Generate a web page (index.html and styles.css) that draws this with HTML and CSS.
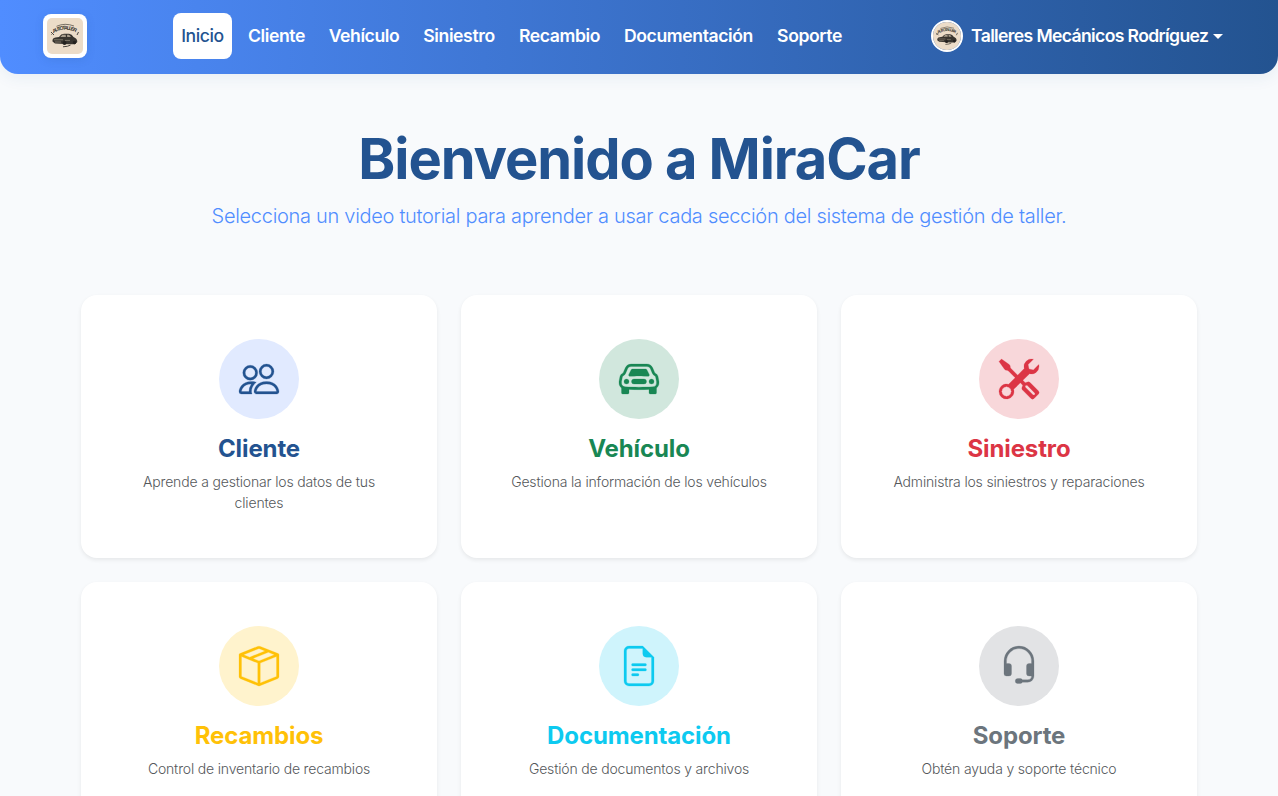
FILE: index.html
```html
<!DOCTYPE html>
<html lang="es">
<head>
<meta charset="utf-8">
<title>MiraCar</title>
<link rel="stylesheet" href="styles.css">
</head>
<body>
<header class="navbar">
  <a class="brand"><svg viewBox="0 0 36 36">
    <rect width="36" height="36" fill="#ecdcc8"/>
    <path id="arc" d="M6.500 15Q18 8 30 15" fill="none"/>
    <text class="brand-text"><textPath href="#arc" textLength="23.500">AUTOTALLER</textPath></text>
    <g id="car">
    <path d="M9.500 8.300Q18 4.500 27 8" fill="none" stroke="#5b544b" stroke-width=".8"/>
    <path d="M4 14l3 3M4.500 16.500l2-2M30 17l1.500-3" stroke="#4a443d" stroke-width="1"/>
    <path d="M5.500 23.500Q5 20 8.500 19.500L12 19Q14 15.800 17 15.700H22Q25 16 26.500 19Q30.500 20.500 30.300 24L28 26.200H22L8 25.500Z" fill="#39352f"/>
    <path d="M13.300 19l2.200-2.200h3.200l.2 2.300zM20 16.800h2l2 2.200h-3.800z" fill="#a89d8c"/>
    <path d="M7 21.800h9M18 22.400h5M8 24h6" stroke="#9b9080" stroke-width=".7"/>
    <circle cx="17.500" cy="25" r="2" fill="#24211e"/><circle cx="27.500" cy="24.500" r="1.700" fill="#24211e"/>
    <path d="M16 28.800q5-.2 7.500-1.700" stroke="#4a443d" fill="none" stroke-width="1"/>
    </g>
  </svg></a>
  <nav class="menu">
    <a class="link link-inicio active">Inicio</a>
    <a class="link link-cliente">Cliente</a>
    <a class="link link-vehiculo">Vehículo</a>
    <a class="link link-siniestro">Siniestro</a>
    <a class="link link-recambio">Recambio</a>
    <a class="link link-documentacion">Documentación</a>
    <a class="link link-soporte">Soporte</a>
  </nav>
  <a class="user">
    <span class="avatar"><svg viewBox="0 0 36 36">
      <rect width="36" height="36" fill="#ecdcc8"/>
      <text class="brand-text"><textPath href="#arc" textLength="23.500">AUTOTALLER</textPath></text>
      <use href="#car"/>
    </svg></span>
    <span class="user-name">Talleres Mecánicos Rodríguez</span>
    <span class="caret"></span>
  </a>
</header>
<main class="page">
  <h1 class="title">Bienvenido a MiraCar</h1>
  <p class="subtitle">Selecciona un video tutorial para aprender a usar cada sección del sistema de gestión de taller.</p>
  <section class="grid">
    <article class="card cliente">
      <div class="icon"><svg viewBox="0 0 16 16"><path d="M15 14s1 0 1-1-1-4-5-4-5 3-5 4 1 1 1 1zm-7.978-1L7 12.996c.001-.264.167-1.030.76-1.720C8.312 10.629 9.282 10 11 10c1.717 0 2.687.63 3.240 1.276.593.69.758 1.457.76 1.720l-.008.002-.014.002zM11 7a2 2 0 1 0 0-4 2 2 0 0 0 0 4m3-2a3 3 0 1 1-6 0 3 3 0 0 1 6 0M6.936 9.280a6 6 0 0 0-1.230-.247A7 7 0 0 0 5 9c-4 0-5 3-5 4q0 1 1 1h4.216A2.240 2.240 0 0 1 5 13c0-1.010.377-2.042 1.090-2.904.243-.294.526-.569.846-.816M4.920 10A5.500 5.500 0 0 0 4 13H1c0-.26.164-1.030.76-1.724.545-.636 1.492-1.256 3.160-1.275ZM1.500 5.500a3 3 0 1 1 6 0 3 3 0 0 1-6 0m3-2a2 2 0 1 0 0 4 2 2 0 0 0 0-4"/></svg></div>
      <h2>Cliente</h2>
      <p>Aprende a gestionar los datos de tus clientes</p>
    </article>
    <article class="card vehiculo">
      <div class="icon"><svg viewBox="0 0 16 16"><path d="M4 9a1 1 0 1 1-2 0 1 1 0 0 1 2 0m10 0a1 1 0 1 1-2 0 1 1 0 0 1 2 0M6 8a1 1 0 0 0 0 2h4a1 1 0 1 0 0-2zM4.862 4.276 3.906 6.190a.51.51 0 0 0 .497.731c.91-.073 2.350-.17 3.597-.17s2.688.097 3.597.17a.51.51 0 0 0 .497-.731l-.956-1.913A.5.5 0 0 0 10.691 4H5.309a.5.5 0 0 0-.447.276"/><path d="M2.520 3.515A2.500 2.500 0 0 1 4.820 2h6.362c1 0 1.904.596 2.298 1.515l.792 1.848c.075.175.21.319.38.404.5.25.855.715.965 1.262l.335 1.679q.05.242.049.49v.413c0 .814-.39 1.543-1 1.997V13.500a.5.5 0 0 1-.5.5h-2a.5.5 0 0 1-.5-.5v-1.338c-1.292.048-2.745.088-4 .088s-2.708-.04-4-.088V13.500a.5.5 0 0 1-.5.5h-2a.5.5 0 0 1-.5-.5v-1.892c-.61-.454-1-1.183-1-1.997v-.413a2.500 2.500 0 0 1 .049-.49l.335-1.680c.11-.546.465-1.012.964-1.261a.8.8 0 0 0 .381-.404l.792-1.848ZM4.820 3a1.500 1.500 0 0 0-1.379.91l-.792 1.847a1.800 1.800 0 0 1-.853.904.8.8 0 0 0-.43.564L1.030 8.904a1.500 1.500 0 0 0-.03.294v.413c0 .796.62 1.448 1.408 1.484 1.555.07 3.786.155 5.592.155s4.037-.084 5.592-.155A1.480 1.480 0 0 0 15 9.611v-.413q0-.148-.03-.294l-.335-1.680a.8.8 0 0 0-.43-.563 1.800 1.800 0 0 1-.853-.904l-.792-1.848A1.500 1.500 0 0 0 11.180 3z"/></svg></div>
      <h2>Vehículo</h2>
      <p>Gestiona la información de los vehículos</p>
    </article>
    <article class="card siniestro">
      <div class="icon"><svg viewBox="0 0 16 16"><path d="M1 0 0 1l2.200 3.081a1 1 0 0 0 .815.419h.07a1 1 0 0 1 .708.293l2.675 2.675-2.617 2.654A3.003 3.003 0 0 0 0 13a3 3 0 1 0 5.878-.851l2.654-2.617.968.968-.305.914a1 1 0 0 0 .242 1.023l3.270 3.270a.997.997 0 0 0 1.414 0l1.586-1.586a.997.997 0 0 0 0-1.414l-3.270-3.270a1 1 0 0 0-1.023-.242L10.500 9.500l-.96-.96 2.680-2.643A3.005 3.005 0 0 0 16 3q0-.405-.102-.777l-2.140 2.141L12 4l-.364-1.757L13.777.102a3 3 0 0 0-3.675 3.680L7.462 6.460 4.793 3.793a1 1 0 0 1-.293-.707v-.071a1 1 0 0 0-.419-.814zm9.646 10.646a.5.5 0 0 1 .708 0l2.914 2.915a.5.5 0 0 1-.707.707l-2.915-2.914a.5.5 0 0 1 0-.708M3 11l.471.242.529.026.287.445.445.287.026.529L5 13l-.242.471-.026.529-.445.287-.287.445-.529.026L3 15l-.471-.242L2 14.732l-.287-.445L1.268 14l-.026-.529L1 13l.242-.471.026-.529.445-.287.287-.445.529-.026z"/></svg></div>
      <h2>Siniestro</h2>
      <p>Administra los siniestros y reparaciones</p>
    </article>
    <article class="card recambios">
      <div class="icon"><svg viewBox="0 0 16 16"><path d="M8.186 1.113a.5.5 0 0 0-.372 0L1.846 3.500l2.404.961L10.404 2zm3.564 1.426L5.596 5 8 5.961 14.154 3.500zm3.250 1.700-6.500 2.600v7.922l6.500-2.600V4.240zM7.500 14.762V6.838L1 4.239v7.923zM7.443.184a1.500 1.500 0 0 1 1.114 0l7.129 2.852A.5.5 0 0 1 16 3.500v8.662a1 1 0 0 1-.629.928l-7.185 2.874a.5.5 0 0 1-.372 0L.63 13.090a1 1 0 0 1-.63-.928V3.500a.5.5 0 0 1 .314-.464z"/></svg></div>
      <h2>Recambios</h2>
      <p>Control de inventario de recambios</p>
    </article>
    <article class="card documentacion">
      <div class="icon"><svg viewBox="0 0 16 16"><path d="M5.500 7a.5.5 0 0 0 0 1h5a.5.5 0 0 0 0-1zM5 9.500a.5.5 0 0 1 .5-.5h5a.5.5 0 0 1 0 1h-5a.5.5 0 0 1-.5-.5m0 2a.5.5 0 0 1 .5-.5h2a.5.5 0 0 1 0 1h-2a.5.5 0 0 1-.5-.5"/><path d="M9.500 0H4a2 2 0 0 0-2 2v12a2 2 0 0 0 2 2h8a2 2 0 0 0 2-2V4.500zm0 1v2A1.500 1.500 0 0 0 11 4.500h2V14a1 1 0 0 1-1 1H4a1 1 0 0 1-1-1V2a1 1 0 0 1 1-1z"/></svg></div>
      <h2>Documentación</h2>
      <p>Gestión de documentos y archivos</p>
    </article>
    <article class="card soporte">
      <div class="icon"><svg viewBox="0 0 16 16"><path d="M8 1a5 5 0 0 0-5 5v1h1a1 1 0 0 1 1 1v3a1 1 0 0 1-1 1H3a1 1 0 0 1-1-1V6a6 6 0 1 1 12 0v6a2.500 2.500 0 0 1-2.500 2.500H9.366a1 1 0 0 1-.866.5h-1a1 1 0 1 1 0-2h1a1 1 0 0 1 .866.5H11.500A1.500 1.500 0 0 0 13 12h-1a1 1 0 0 1-1-1V8a1 1 0 0 1 1-1h1V6a5 5 0 0 0-5-5"/></svg></div>
      <h2>Soporte</h2>
      <p>Obtén ayuda y soporte técnico</p>
    </article>
  </section>
</main>
</body>
</html>
```
FILE: styles.css
```css
* { box-sizing: border-box; }
html { height: 100%; overflow: hidden; }
body {
  margin: 0;
  height: 100%;
  overflow: hidden;
  background: #f8fafc;
  font-family: Inter, "Liberation Sans", sans-serif;
  color: #212529;
}
.brand-text { font: 700 5.2px "Liberation Sans", sans-serif; fill: #39352f; }

.navbar {
  display: flex;
  align-items: center;
  height: 74px;
  padding: 0 55px 2px 43px;
  border-radius: 0 0 18px 18px;
  background: linear-gradient(90deg, #508dff 0%, #235390 100%);
  box-shadow: 0 4px 16px rgba(35, 83, 144, .07);
}
.brand {
  width: 44px;
  height: 44px;
  padding: 4px;
  border-radius: 8px;
  background: #fff;
  box-shadow: 0 2px 8px rgba(35, 83, 144, .15);
}
.brand svg { display: block; border-radius: 5px; }
.menu { display: flex; gap: 8px; margin-left: 86px; }
.link {
  display: flex;
  align-items: center;
  justify-content: center;
  height: 46px;
  padding-bottom: 2px;
  border-radius: 8px;
  color: #fff;
  font-size: 17.6px;
  font-weight: 600;
  letter-spacing: -0.4px;
  white-space: nowrap;
}
.link.active { background: #fff; color: #235390; font-weight: 500; }
.link-inicio { width: 59px; }
.link-cliente { width: 73px; }
.link-vehiculo { width: 86px; }
.link-siniestro { width: 88px; }
.link-recambio { width: 97px; }
.link-documentacion { width: 145px; }
.link-soporte { width: 81px; }
.user { display: flex; align-items: center; margin-left: auto; color: #fff; }
.avatar {
  width: 32px;
  height: 32px;
  border: 2px solid #fff;
  border-radius: 50%;
  overflow: hidden;
}
.avatar svg { display: block; }
.user-name {
  width: 238px;
  margin-left: 8px;
  padding-bottom: 2px;
  font-size: 17.6px;
  font-weight: 600;
  letter-spacing: -0.64px;
  white-space: nowrap;
}
.caret {
  margin-left: 4px;
  border: 5px solid transparent;
  border-top-color: #fff;
  border-bottom: 0;
}

.page { width: 1116px; margin: 0 auto; padding-top: 52px; }
.title {
  margin: 0;
  color: #235390;
  font-size: 56px;
  line-height: 67px;
  font-weight: 700;
  letter-spacing: -1.07px;
  text-align: center;
}
.subtitle {
  margin: 8px 0 0;
  color: #508dff;
  font-size: 20px;
  line-height: 30px;
  font-weight: 300;
  letter-spacing: -0.3px;
  text-align: center;
  white-space: nowrap;
}
.grid {
  display: grid;
  grid-template-columns: repeat(3, 356px);
  grid-auto-rows: 263px;
  gap: 24px;
  margin-top: 64px;
}
.card {
  display: flex;
  flex-direction: column;
  align-items: center;
  padding: 44px 48px 0;
  border-radius: 16px;
  background: #fff;
  box-shadow: 0 2px 4px rgba(0, 0, 0, .075);
  text-align: center;
}
.icon {
  display: grid;
  place-items: center;
  width: 80px;
  height: 80px;
  border-radius: 50%;
}
.icon svg {
  width: 40px;
  height: 40px;
  overflow: visible;
  fill: currentColor;
  stroke: currentColor;
  stroke-width: .1;
}
.card h2 {
  margin: 15px 0 8px;
  font-size: 24px;
  line-height: 29px;
  font-weight: 700;
  letter-spacing: -0.12px;
}
.card p {
  margin: 0;
  color: #55585b;
  font-size: 14px;
  line-height: 21px;
  font-weight: 350;
  letter-spacing: -0.17px;
}
.cliente .icon { background: #e1eaff; }
.cliente .icon, .cliente h2 { color: #235390; }
.vehiculo .icon { background: #d1e7dd; }
.vehiculo .icon, .vehiculo h2 { color: #198754; }
.siniestro .icon { background: #f8d7da; }
.siniestro .icon, .siniestro h2 { color: #dc3545; }
.recambios .icon { background: #fff3cd; }
.recambios .icon, .recambios h2 { color: #ffc107; }
.documentacion .icon { background: #cff4fc; }
.documentacion .icon, .documentacion h2 { color: #0dcaf0; }
.soporte .icon { background: #e2e3e5; }
.soporte .icon, .soporte h2 { color: #6c757d; }
```
